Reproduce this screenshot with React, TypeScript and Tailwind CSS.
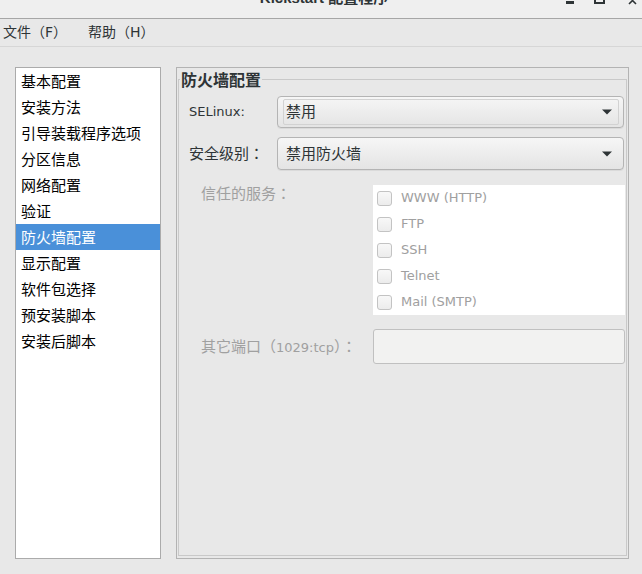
const menuItems = ["文件（F）", "帮助（H）"];

const navItems = [
  "基本配置",
  "安装方法",
  "引导装载程序选项",
  "分区信息",
  "网络配置",
  "验证",
  "防火墙配置",
  "显示配置",
  "软件包选择",
  "预安装脚本",
  "安装后脚本",
];

const services = ["WWW (HTTP)", "FTP", "SSH", "Telnet", "Mail (SMTP)"];

// full-width colon centred in its box, as GTK draws it
const Colon = () => (
  <span className="font-['Noto_Sans_CJK_TC',sans-serif]">：</span>
);

const Arrow = () => (
  <svg width="10" height="6" viewBox="0 0 10 6" className="shrink-0">
    <path d="M0 0.5 L10 0.5 L5 5.5 Z" fill="#2e3436" />
  </svg>
);

const Combo = ({ value, focused }: { value: string; focused?: boolean }) => (
  <div className="flex h-full w-[347px] rounded-[4px] border border-[#b4b4b4] bg-gradient-to-b from-[#f6f6f6] to-[#e4e4e4] py-[2px] pl-[5px] pr-[4px] shadow-[0_1px_0_rgba(0,0,0,0.06)]">
    <div
      className={`flex flex-1 items-center justify-between rounded-[2px] border pl-[2px] pr-[6px] ${
        focused ? "border-[#d2d2d2]" : "border-transparent"
      }`}
    >
      <span className="text-[15px] leading-[20px]">{value}</span>
      <Arrow />
    </div>
  </div>
);

export default function App() {
  return (
    <div className="flex h-[574px] w-[642px] flex-col overflow-hidden bg-[#e8e8e8] font-['DejaVu_Sans','Noto_Sans_CJK_SC',sans-serif] text-[#2e3436]">
      {/* title bar, top part is cut off in the shot */}
      <div className="relative h-[19px] shrink-0 overflow-hidden border-b border-[#a6a6a6] bg-[#efefef]">
        <div className="-mt-[10px] pl-[6px] text-center font-['Liberation_Sans','Noto_Sans_CJK_SC',sans-serif] text-[15px] font-bold leading-[15px]">
          Kickstart 配置程序
        </div>
        <svg width="90" height="18" className="absolute right-0 top-0">
          <rect x="14" y="1" width="8" height="3" fill="#2e3436" />
          <rect x="43" y="-6" width="9" height="9" fill="none" stroke="#2e3436" strokeWidth="2" />
          <path d="M77 -3 L84 4 M84 -3 L77 4" stroke="#2e3436" strokeWidth="1.6" />
        </svg>
      </div>

      {/* menu bar */}
      <div className="flex h-[28px] shrink-0 items-center gap-[21px] border-b border-[#d6d6d6] pl-[3px] text-[14px]">
        {menuItems.map((m) => (
          <span key={m}>{m}</span>
        ))}
      </div>

      <div className="flex flex-1 gap-[15px] pl-[15px] pt-[20px]">
        {/* section list */}
        <ul className="h-[492px] w-[146px] border border-[#ababab] bg-white">
          {navItems.map((item) => (
            <li
              key={item}
              className={`h-[26px] pl-[5px] font-['Noto_Sans_CJK_SC',sans-serif] text-[15px] leading-[25px] ${
                item === "防火墙配置" ? "bg-[#4a90d9] text-white" : "text-black"
              }`}
            >
              {item}
            </li>
          ))}
        </ul>

        {/* firewall panel */}
        <div className="h-[492px] w-[453px] border border-[#b3b3b3] px-[1px] pb-[2px]">
          <fieldset className="h-full border border-[#c9c9c9]">
            <legend className="ml-[1px] px-[1px] font-['Noto_Sans_CJK_SC',sans-serif] text-[16px] font-bold leading-[22px] text-[#2e3436]">
              防火墙配置
            </legend>

            <div className="mt-[6px] flex h-[32px] items-center">
              <span className="w-[98px] pl-[10px] text-[13px]">SELinux:</span>
              <Combo value="禁用" focused />
            </div>

            <div className="mt-[9px] flex h-[33px] items-center">
              <span className="w-[98px] pl-[10px] text-[15px]">
                安全级别
                <Colon />
              </span>
              <Combo value="禁用防火墙" />
            </div>

            <div className="mt-[15px] flex">
              <span className="w-[194px] pl-[22px] text-[15px] leading-[15px] text-[#a0a0a0]">
                信任的服务
                <Colon />
              </span>
              <div className="h-[130px] w-[252px] bg-white pl-[4px]">
                {services.map((s) => (
                  <div key={s} className="flex h-[26px] items-center gap-[9px]">
                    <span className="h-[15px] w-[15px] rounded-[3px] border border-[#c3c3c3] bg-gradient-to-b from-[#f8f8f8] to-[#ececec]" />
                    <span className="text-[13px] text-[#a0a0a0]">{s}</span>
                  </div>
                ))}
              </div>
            </div>

            <div className="mt-[14px] flex h-[35px] items-center">
              <span className="w-[194px] pl-[22px] text-[15px] text-[#a0a0a0]">
                其它端口（<span className="text-[13px]">1029:tcp</span>）
                <Colon />
              </span>
              <div className="h-full w-[252px] rounded-[3px] border border-[#c0c0c0] bg-[#f2f2f1]" />
            </div>
          </fieldset>
        </div>
      </div>
    </div>
  );
}
